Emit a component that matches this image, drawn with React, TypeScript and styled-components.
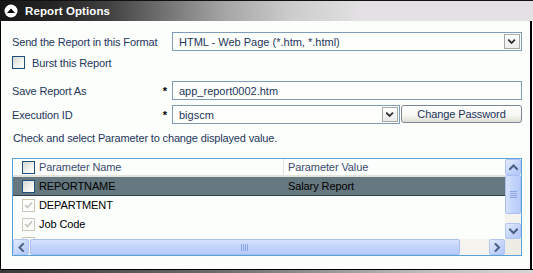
import React from 'react';
import styled, { createGlobalStyle } from 'styled-components';

const Global = createGlobalStyle`
  html, body { margin: 0; padding: 0; background: #ffffff; }
  body { font-family: "Liberation Sans", Arial, sans-serif; font-size: 11px; }
  * { box-sizing: border-box; }
`;

const Panel = styled.div`
  width: 533px;
  height: 273px;
  display: flex;
  flex-direction: column;
  overflow: hidden;
`;

const HeaderBar = styled.div`
  height: 21px;
  flex: none;
  border-top: 1px solid #111;
  background: linear-gradient(to right, #151515 0%, #262626 10%, #3f3f3f 20%, #6e6e6e 30%, #a5a5a5 42%, #cdcdcd 55%, #e3e1e3 68%, #e3e1e3 100%);
  display: flex;
  align-items: center;
  padding-left: 4px;
  gap: 7px;
`;

const Title = styled.span`
  color: #ffffff;
  font-weight: bold;
  font-size: 11.5px;
  letter-spacing: 0.1px;
`;

const Body = styled.div`
  flex: 1;
  width: 532px;
  border-left: 1px solid #000;
  border-right: 2px solid #000;
  background: #fcfefc;
  padding: 11px 8px 0 11px;
  display: flex;
  flex-direction: column;
`;

const Footer = styled.div`
  height: 4px;
  flex: none;
  border-top: 1px solid #000;
  background: linear-gradient(to right, #3a3a3a, #6a6a6a 40%, #bdbdbd 80%, #d6d6d6);
`;

const FormRow = styled.div<{ $mt: number; $h: number }>`
  display: grid;
  grid-template-columns: 149px 11px 1fr;
  align-items: center;
  margin-top: ${(p) => p.$mt}px;
  height: ${(p) => p.$h}px;
`;

const Label = styled.span<{ $span?: number }>`
  color: #24365a;
  letter-spacing: -0.15px;
  grid-column: span ${(p) => p.$span || 1};
  white-space: nowrap;
`;

const Star = styled.span`
  color: #000;
  font-weight: bold;
  font-size: 11px;
  text-align: center;
  padding-right: 3px;
`;

const Field = styled.div`
  height: 19px;
  border: 1px solid #7f9db9;
  background: #fdfffd;
  display: flex;
  align-items: center;
  padding-left: 6px;
  color: #24365a;
  white-space: nowrap;
  position: relative;
  flex: 1;
`;

const DropBtn = styled.div`
  position: absolute;
  right: 1px;
  top: 1px;
  bottom: 1px;
  width: 16px;
  border: 1px solid #a8a8a8;
  background: linear-gradient(#ffffff, #ebebeb);
  display: flex;
  align-items: center;
  justify-content: center;
`;

const FieldGroup = styled.div`
  display: flex;
  gap: 1px;
  height: 19px;
`;

const PushButton = styled.button`
  width: 121px;
  height: 18px;
  border: 1px solid #7b8694;
  border-radius: 3px;
  background: linear-gradient(#ffffff 0%, #f6f6f2 60%, #dedcd3 100%);
  color: #22345a;
  font-family: "Liberation Sans", Arial, sans-serif;
  font-size: 11px;
  letter-spacing: -0.1px;
  padding: 0;
`;

const CheckRow = styled.div`
  display: flex;
  align-items: center;
  gap: 7px;
  margin-top: 5px;
  height: 13px;
`;

const Hint = styled.div`
  margin-top: 7px;
  height: 14px;
  line-height: 14px;
  color: #24365a;
  letter-spacing: -0.15px;
  padding-left: 1px;
`;

const Box = styled.span<{ $kind: 'empty' | 'disabled' | 'ghost' }>`
  width: 13px;
  height: 13px;
  flex: none;
  display: inline-flex;
  align-items: center;
  justify-content: center;
  border: 1px solid ${(p) => (p.$kind === 'empty' ? '#1c5180' : '#cac8bb')};
  background: ${(p) => (p.$kind === 'empty' ? 'linear-gradient(135deg, #d8d8d2 0%, #f6f6f3 70%, #ffffff 100%)' : '#fdfdfb')};
`;

const TableBox = styled.div`
  margin-top: 13px;
  height: 98px;
  border: 1px solid #5aa3d8;
  display: grid;
  grid-template-columns: 1fr 16px;
  grid-template-rows: 1fr 16px;
  background: #fcfefc;
`;

const Viewport = styled.div`
  overflow: hidden;
`;

const HeadRow = styled.div`
  display: grid;
  grid-template-columns: 270px 1fr;
  height: 18px;
  border-bottom: 2px solid #e3e2dc;
  color: #3a4a6c;
`;

const HeadCell = styled.div<{ $first?: boolean }>`
  display: flex;
  align-items: center;
  gap: 4px;
  padding-left: ${(p) => (p.$first ? '9px' : '4px')};
  border-left: ${(p) => (p.$first ? 'none' : '1px solid #e3e2dc')};
  letter-spacing: -0.1px;
`;

const DataRow = styled.div<{ $selected?: boolean }>`
  display: grid;
  grid-template-columns: 270px 1fr;
  height: 19px;
  background: ${(p) => (p.$selected ? '#65777f' : 'transparent')};
  border-bottom: 1px solid ${(p) => (p.$selected ? '#2f3e4c' : 'transparent')};
  color: #000;
`;

const DataCell = styled.div<{ $first?: boolean }>`
  display: flex;
  align-items: center;
  gap: 4px;
  padding-left: ${(p) => (p.$first ? '9px' : '5px')};
  letter-spacing: -0.1px;
  white-space: nowrap;
`;

const VScroll = styled.div`
  display: grid;
  grid-template-rows: 16px 1fr 16px;
  background: #f4f3ee;
`;

const HScroll = styled.div`
  display: grid;
  grid-template-columns: 16px 1fr 16px;
  background: #f4f3ee;
`;

const Track = styled.div<{ $vertical?: boolean }>`
  display: flex;
  flex-direction: ${(p) => (p.$vertical ? 'column' : 'row')};
  padding: ${(p) => (p.$vertical ? '0' : '0 1px')};
`;

const Thumb = styled.div<{ $vertical?: boolean }>`
  border: 1px solid #a9bff2;
  border-radius: 2px;
  background: ${(p) =>
    p.$vertical
      ? 'linear-gradient(to right, #d6e1fd, #c3d4fb 50%, #b8cbf8)'
      : 'linear-gradient(#d6e1fd, #c3d4fb 50%, #b8cbf8)'};
  display: flex;
  align-items: center;
  justify-content: center;
`;

const ScrollBtn = styled.div`
  border: 1px solid #b1c6f4;
  border-radius: 2px;
  background: linear-gradient(135deg, #e3ebfe, #c2d3fb 60%, #b3c8f8);
  display: flex;
  align-items: center;
  justify-content: center;
`;

const Corner = styled.div`
  background: #eeede5;
`;

const Chevron = ({ dir, color = '#4d6185', small }: { dir: 'up' | 'down' | 'left' | 'right'; color?: string; small?: boolean }) => {
  const pts = {
    up: '1,5 4.5,1.5 8,5',
    down: '1,1.5 4.5,5 8,1.5',
    left: '5,1 1.5,4.5 5,8',
    right: '1.5,1 5,4.5 1.5,8',
  }[dir];
  const vert = dir === 'up' || dir === 'down';
  const s = small ? 0.8 : 1;
  return (
    <svg width={(vert ? 9 : 7) * s} height={(vert ? 7 : 9) * s} viewBox={vert ? '0 0 9 7' : '0 0 7 9'}>
      <polyline points={pts} fill="none" stroke={color} strokeWidth={small ? 2.2 : 2} strokeLinecap="square" />
    </svg>
  );
};

const Tick = () => (
  <svg width="9" height="9" viewBox="0 0 9 9">
    <polyline points="1,4 3.5,6.5 8,1.5" fill="none" stroke="#c4c3bb" strokeWidth="1.6" />
  </svg>
);

const Grip = ({ vertical }: { vertical?: boolean }) =>
  vertical ? (
    <svg width="7" height="8" viewBox="0 0 7 8">
      {[0, 2, 4, 6].map((y) => (
        <rect key={y} x="0" y={y} width="7" height="1" fill="#8aa5e8" />
      ))}
    </svg>
  ) : (
    <svg width="8" height="7" viewBox="0 0 8 7">
      {[0, 2, 4, 6].map((x) => (
        <rect key={x} x={x} y="0" width="1" height="7" fill="#8aa5e8" />
      ))}
    </svg>
  );

const CollapseIcon = () => (
  <svg width="14" height="14" viewBox="0 0 14 14">
    <circle cx="7" cy="7" r="6.5" fill="#ffffff" />
    <polygon points="3,9 7,4.5 11,9" fill="#000" />
  </svg>
);

export default function App() {
  return (
    <>
      <Global />
      <Panel>
        <HeaderBar>
          <CollapseIcon />
          <Title>Report Options</Title>
        </HeaderBar>
        <Body>
          <FormRow $mt={0} $h={19}>
            <Label $span={2}>Send the Report in this Format</Label>
            <Field>
              HTML - Web Page (*.htm, *.html)
              <DropBtn>
                <Chevron dir="down" color="#333" small />
              </DropBtn>
            </Field>
          </FormRow>
          <CheckRow>
            <Box $kind="empty" />
            <Label>Burst this Report</Label>
          </CheckRow>
          <FormRow $mt={12} $h={19}>
            <Label>Save Report As</Label>
            <Star>*</Star>
            <Field>app_report0002.htm</Field>
          </FormRow>
          <FormRow $mt={5} $h={19}>
            <Label>Execution ID</Label>
            <Star>*</Star>
            <FieldGroup>
              <Field>
                bigscm
                <DropBtn>
                  <Chevron dir="down" color="#333" small />
                </DropBtn>
              </Field>
              <PushButton>Change Password</PushButton>
            </FieldGroup>
          </FormRow>
          <Hint>Check and select Parameter to change displayed value.</Hint>
          <TableBox>
            <Viewport>
              <HeadRow>
                <HeadCell $first>
                  <Box $kind="empty" />
                  Parameter Name
                </HeadCell>
                <HeadCell>Parameter Value</HeadCell>
              </HeadRow>
              <DataRow $selected>
                <DataCell $first>
                  <Box $kind="empty" />
                  REPORTNAME
                </DataCell>
                <DataCell>Salary Report</DataCell>
              </DataRow>
              <DataRow>
                <DataCell $first>
                  <Box $kind="disabled">
                    <Tick />
                  </Box>
                  DEPARTMENT
                </DataCell>
                <DataCell />
              </DataRow>
              <DataRow>
                <DataCell $first>
                  <Box $kind="disabled">
                    <Tick />
                  </Box>
                  Job Code
                </DataCell>
                <DataCell />
              </DataRow>
              <DataRow>
                <DataCell $first>
                  <Box $kind="ghost" />
                </DataCell>
                <DataCell />
              </DataRow>
            </Viewport>
            <VScroll>
              <ScrollBtn>
                <Chevron dir="up" />
              </ScrollBtn>
              <Track $vertical>
                <Thumb $vertical style={{ height: 39 }}>
                  <Grip vertical />
                </Thumb>
              </Track>
              <ScrollBtn>
                <Chevron dir="down" />
              </ScrollBtn>
            </VScroll>
            <HScroll>
              <ScrollBtn>
                <Chevron dir="left" />
              </ScrollBtn>
              <Track>
                <Thumb style={{ width: 430 }}>
                  <Grip />
                </Thumb>
              </Track>
              <ScrollBtn>
                <Chevron dir="right" />
              </ScrollBtn>
            </HScroll>
            <Corner />
          </TableBox>
        </Body>
        <Footer />
      </Panel>
    </>
  );
}
